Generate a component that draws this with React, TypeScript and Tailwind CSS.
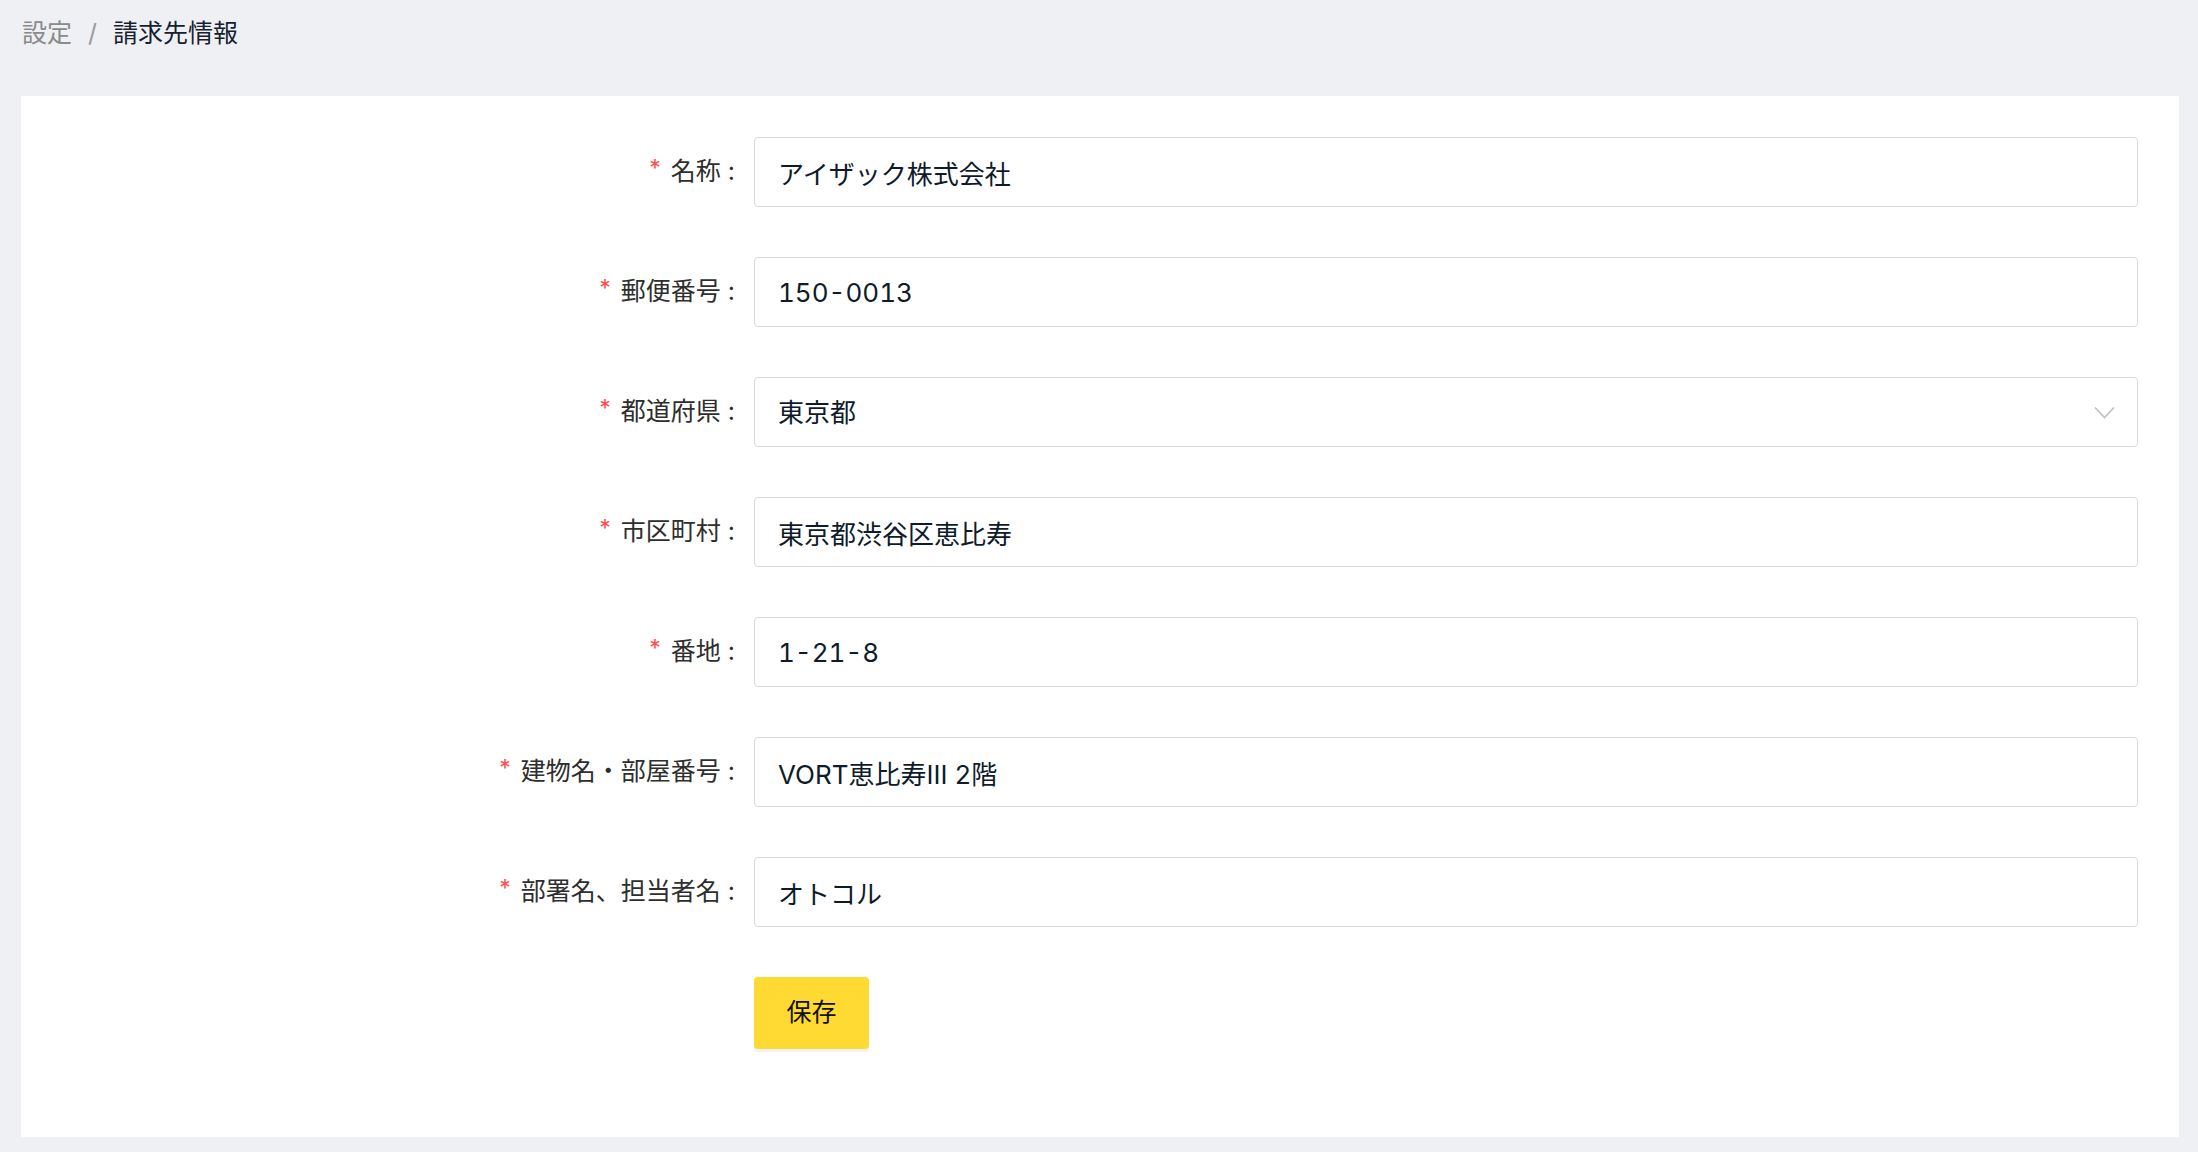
import { useState } from "react";

interface Field {
  id: string;
  label: string;
  value: string;
  select?: boolean;
}

const FIELDS: Field[] = [
  { id: "name", label: "名称", value: "アイザック株式会社" },
  { id: "zip", label: "郵便番号", value: "150-0013" },
  { id: "pref", label: "都道府県", value: "東京都", select: true },
  { id: "city", label: "市区町村", value: "東京都渋谷区恵比寿" },
  { id: "street", label: "番地", value: "1-21-8" },
  { id: "building", label: "建物名・部屋番号", value: "VORT恵比寿III 2階" },
  { id: "contact", label: "部署名、担当者名", value: "オトコル" },
];

function Chevron() {
  return (
    <svg width="21" height="13" viewBox="0 0 21 13" fill="none">
      <path d="M1 1.5 L10.5 11.5 L20 1.5" stroke="#bfbfbf" strokeWidth="1.6" />
    </svg>
  );
}

export default function App() {
  const [values, setValues] = useState<Record<string, string>>(
    Object.fromEntries(FIELDS.map((f) => [f.id, f.value]))
  );

  return (
    <div className="min-h-[1152px] w-full bg-[#eff0f4] font-['Inter','Noto_Sans_CJK_JP',sans-serif] text-[25px]">
      <div className="flex h-[96px] items-start gap-[16px] pl-[22px] pt-[14px] leading-[38px]">
        <span className="text-[#8a8a8a]">設定</span>
        <span className="text-[#9a9a9a]">/</span>
        <span className="text-[#16212f]">請求先情報</span>
      </div>

      <div className="pl-[21px] pr-[19px]">
        <div className="bg-white pb-[88px] pt-[41px]">
          <div className="flex flex-col gap-[50px]">
            {FIELDS.map((f) => (
              <div key={f.id} className="grid grid-cols-[733px_1384px]">
                <label className="flex h-[70px] items-center justify-end pr-[19px] text-[#2e2e2e]">
                  <span className="mr-[10px] mt-[-8px] text-[23px] leading-none text-[#ff4d4f]">*</span>
                  <span>{f.label}</span>
                  <span className="ml-[7px]">:</span>
                </label>
                {f.select ? (
                  <div className="flex h-[70px] items-center justify-between rounded-[4px] border border-[#d9d9d9] pl-[23px] pr-[22px] text-[26px] text-[#0e1b2a]">
                    <span>{values[f.id]}</span>
                    <Chevron />
                  </div>
                ) : (
                  <input
                    value={values[f.id]}
                    onChange={(e) => setValues({ ...values, [f.id]: e.target.value })}
                    className="h-[70px] rounded-[4px] border border-[#d9d9d9] px-[23px] text-[26px] tabular-nums text-[#0e1b2a] outline-none"
                  />
                )}
              </div>
            ))}

            <div className="grid grid-cols-[733px_1384px]">
              <div />
              <div>
                <button
                  type="button"
                  className="h-[72px] w-[115px] rounded-[4px] bg-[#ffda33] text-[#111111] shadow-[0_3px_0_rgba(0,0,0,0.05)]"
                >
                  保存
                </button>
              </div>
            </div>
          </div>
        </div>
      </div>
    </div>
  );
}
